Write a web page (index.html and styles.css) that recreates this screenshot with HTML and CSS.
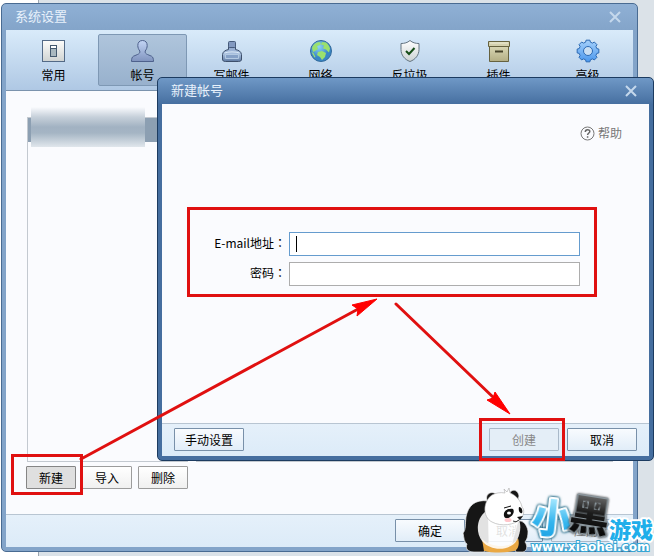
FILE: index.html
```
<!DOCTYPE html>
<html lang="zh-CN">
<head>
    <meta charset="UTF-8">
    <meta name="viewport" content="width=device-width, initial-scale=1.0">
    <title>系统设置</title>
    <link rel="stylesheet" href="styles.css">
</head>
<body>
    <div class="desktop">
        <section class="window">
            <header class="titlebar">
                <h1 class="title">系统设置</h1>
                <button type="button" class="close" aria-label="关闭">
                    <svg width="12" height="12" viewBox="0 0 12 12"><path d="M1 1L11 11M11 1L1 11"/></svg>
                </button>
            </header>
            <nav class="toolbar">
                <button type="button" class="tool">
                    <svg class="icon" viewBox="0 0 24 24">
                        <defs><linearGradient id="g-panel" x2="0" y2="1"><stop stop-color="#fdfdfb"/><stop offset="1" stop-color="#cfd3d2"/></linearGradient></defs>
                        <rect x="0.5" y="1.5" width="22" height="21" fill="url(#g-panel)" stroke="#536a86"/>
                        <rect x="8.5" y="6.5" width="6" height="11" fill="#a9b8bf" stroke="#44596e"/>
                        <path d="M9 7h5v2h-5z" fill="#fff"/><path d="M9 9.5h5" stroke="#44596e"/>
                    </svg>
                    <span>常用</span>
                </button>
                <button type="button" class="tool active">
                    <svg class="icon" viewBox="0 0 24 24">
                        <defs><linearGradient id="g-user" x2="0" y2="1"><stop stop-color="#c3d5f5"/><stop offset="1" stop-color="#7f93be"/></linearGradient></defs>
                        <path d="M11.500 1.500c-3.200 0-4.700 2.200-4.700 5 0 2 .8 4 2 5.500.4 1.800-.6 2.800-2.500 3.600L2.500 17.200c-1.500.8-2 2.500-2 5.300h22c0-2.800-.5-4.500-2-5.300l-3.800-1.600c-1.900-.8-2.900-1.800-2.500-3.600 1.200-1.500 2-3.500 2-5.500 0-2.800-1.500-5-4.700-5z" fill="url(#g-user)" stroke="#4e618c"/>
                    </svg>
                    <span>帐号</span>
                </button>
                <button type="button" class="tool">
                    <svg class="icon" viewBox="0 0 24 24">
                        <defs><linearGradient id="g-ink" x2="0" y2="1"><stop stop-color="#8ea6cb"/><stop offset=".5" stop-color="#a9c0de"/><stop offset="1" stop-color="#5f7aa2"/></linearGradient></defs>
                        <path d="M8.500 7.500h7v3c3.500.8 5.500 2 6 5v4.500c0 1.800-1 2.500-3 2.500h-13c-2 0-3-.7-3-2.500v-4.500c.5-3 2.500-4.200 6-5z" fill="url(#g-ink)" stroke="#3d4f6b"/>
                        <rect x="8.500" y="2.500" width="7" height="6" rx="1" fill="#8299c0" stroke="#465b7b"/>
                        <path d="M4.500 14c4-1.500 11-1.500 15 0" fill="none" stroke="#dceaf8"/>
                        <path d="M5.500 15.500h13v4h-13z" fill="#86a1c7" stroke="#b4cae3"/>
                    </svg>
                    <span>写邮件</span>
                </button>
                <button type="button" class="tool">
                    <svg class="icon" viewBox="0 0 24 24">
                        <defs><radialGradient id="g-globe" cx=".4" cy=".3"><stop stop-color="#8ed4f5"/><stop offset="1" stop-color="#3886c6"/></radialGradient></defs>
                        <circle cx="12" cy="12" r="10.500" fill="url(#g-globe)" stroke="#336a9b"/>
                        <path d="M3 9c1-3 3.500-5.500 7-6l2 1-1 2-3 1 1 3-3 2-2 1zM13 3l4 .5c2 1.500 3.500 3.500 4 6l-1 4-3-3-3-1 1-3-3-1zM9 13l4-1 4 2-1 4-3 3-2-3-3-2zM2.500 13l2 1 2 4-1 .5z" fill="#9be16d"/>
                    </svg>
                    <span>网络</span>
                </button>
                <button type="button" class="tool">
                    <svg class="icon" viewBox="0 0 24 24">
                        <defs><linearGradient id="g-shield" x2="0" y2="1"><stop stop-color="#fff"/><stop offset="1" stop-color="#cbd2d3"/></linearGradient></defs>
                        <path d="M12 1.500c2.500 2.200 5.500 3 9 3v6c0 5.500-3.500 10-9 12-5.500-2-9-6.500-9-12v-6c3.500 0 6.500-.8 9-3z" fill="url(#g-shield)" stroke="#647480"/>
                        <path d="M8 12l3 3 5.500-6" fill="none" stroke="#154c17" stroke-width="2"/>
                    </svg>
                    <span>反垃圾</span>
                </button>
                <button type="button" class="tool">
                    <svg class="icon" viewBox="0 0 24 24">
                        <defs><linearGradient id="g-box" x2="0" y2="1"><stop stop-color="#d8d6b3"/><stop offset="1" stop-color="#b3ae84"/></linearGradient></defs>
                        <path d="M2.500 7.500h19v15h-19z" fill="url(#g-box)" stroke="#66623f"/>
                        <path d="M1.500 2.500h21v5h-21z" fill="#d4d1ae" stroke="#66623f"/>
                        <path d="M3 4h18" stroke="#efeed9"/><path d="M8 12.500h8" stroke="#46432a" stroke-width="2"/>
                    </svg>
                    <span>插件</span>
                </button>
                <button type="button" class="tool">
                    <svg class="icon" viewBox="-12 -12 24 24">
                        <defs><linearGradient id="g-gear" x2="0" y2="1"><stop stop-color="#a5d0fa"/><stop offset="1" stop-color="#4b98ee"/></linearGradient></defs>
                        <path d="M10.830-1.910L10.830 1.910L8.800 2.400L7.900 4.600L9.010 6.310L6.310 9.010L4.600 7.900L2.400 8.800L1.910 10.830L-1.910 10.830L-2.400 8.800L-4.600 7.900L-6.310 9.010L-9.010 6.310L-7.900 4.600L-8.800 2.400L-10.830 1.910L-10.830-1.910L-8.800-2.400L-7.900-4.600L-9.010-6.310L-6.310-9.010L-4.600-7.900L-2.400-8.800L-1.910-10.830L1.910-10.830L2.400-8.800L4.600-7.900L6.310-9.010L9.010-6.310L7.900-4.600L8.800-2.400Z" fill="url(#g-gear)" stroke="#2c6ab4" stroke-linejoin="round"/>
                        <circle r="4.500" fill="#c8def3" stroke="#2c6ab4"/>
                    </svg>
                    <span>高级</span>
                </button>
            </nav>
            <div class="content">
                <div class="panes">
                    <div class="list">
                        <div class="row"><div class="masked"></div></div>
                    </div>
                    <div class="detail"></div>
                </div>
                <div class="list-actions">
                    <span class="mark mark-new"><button type="button" class="btn small pressed">新建</button></span>
                    <button type="button" class="btn small">导入</button>
                    <button type="button" class="btn small">删除</button>
                </div>
            </div>
            <footer class="footer">
                <button type="button" class="btn">确定</button>
                <button type="button" class="btn">取消</button>
                <button type="button" class="btn" disabled>应用</button>
            </footer>
        </section>

        <section class="window dialog" role="dialog" aria-labelledby="dialog-title">
            <header class="titlebar">
                <h2 class="title" id="dialog-title">新建帐号</h2>
                <button type="button" class="close" aria-label="关闭">
                    <svg width="12" height="12" viewBox="0 0 12 12"><path d="M1 1L11 11M11 1L1 11"/></svg>
                </button>
            </header>
            <div class="dialog-body">
                <a href="#" class="help">
                    <svg width="15" height="15" viewBox="0 0 15 15">
                        <circle cx="7.500" cy="7.500" r="6.500" fill="none" stroke="#777"/>
                        <path d="M5.300 6c0-3 4.500-3 4.500-.5 0 1.500-2.200 1.500-2.200 3.500M7.600 10.200v1.500" fill="none" stroke="#666" stroke-width="1.500"/>
                    </svg>
                    <span>帮助</span>
                </a>
                <form class="account-form" id="account-form">
                    <label for="email">E-mail地址<span class="colon" lang="zh-TW">：</span></label>
                    <div class="field focused"><input type="text" id="email"></div>
                    <label for="password">密码<span class="colon" lang="zh-TW">：</span></label>
                    <div class="field"><input type="password" id="password"></div>
                </form>
            </div>
            <footer class="footer">
                <button type="button" class="btn manual">手动设置</button>
                <span class="mark mark-create"><button type="submit" form="account-form" class="btn" disabled>创建</button></span>
                <button type="button" class="btn">取消</button>
            </footer>
        </section>

        <svg class="arrows" width="654" height="556" viewBox="0 0 654 556">
            <path d="M81 459L360 308M396 304L495 399" fill="none" stroke="#e01010" stroke-width="3" stroke-linecap="round"/>
            <path d="M377 299L357 316L358 309L352 305ZM510 414L487 400L493 398L495 392Z" fill="#f00" stroke="#f00"/>
        </svg>

        <svg class="logo" width="194" height="72" viewBox="460 484 194 72">
            <defs>
                <linearGradient id="g-blue" x2="0" y2="1"><stop offset=".2" stop-color="#a5e8ff"/><stop offset=".6" stop-color="#35b5ee"/><stop offset="1" stop-color="#149de0"/></linearGradient>
                <linearGradient id="g-black" x2="0" y2="1"><stop offset=".2" stop-color="#666"/><stop offset=".5" stop-color="#1c1c1c"/><stop offset="1" stop-color="#000"/></linearGradient>
            </defs>
            <!-- arms, legs and ears -->
            <g fill="#161616" stroke="#eee" stroke-width=".7">
                <path d="M488 501c-13-2-20 5-22 16-1 8 0 13-3 16 1 5 1 9 4 11-2 5 1 8 7 8h10l5-10z"/>
                <path d="M518 521c5-1 9 4 10 10 0 6-1 8-3 11 3 4 2 9-2 10h-7l-4-9z"/>
                <circle cx="492" cy="498" r="5.500"/><path d="M510 493c1-4 8-4 9 3l-1 4z"/>
            </g>
            <path d="M482 539c9 9 30 10 36-1 2 6 0 12-4 13-9 2-21 2-30 0z" fill="#eaa843"/>
            <path d="M486 511c-9 7-11 20-4 30 9 11 29 10 35-1 4-8 4-15 2-20z" fill="#fff" fill-opacity=".88"/>
            <path d="M505 493l-1-4 3 3 2-4 1 5c6 2 11 8 12 14 3 3 2 9-2 12-5 6-19 8-28 3-10-5-9-21 0-27 4-2 8-3 13-2z" fill="#fff" stroke="#aaa" stroke-width=".6"/>
            <path d="M513 509c-5-1-10 2-9 7 1 4 7 2 9-2 1-2 1-4 0-5zM519 507c3 0 4 4 3 6-2 1-4-2-3-6zM517 517l6-1-3 4z" fill="#111"/>
            <path d="M504 508l7-2" stroke="#111"/><ellipse cx="509" cy="513" rx="2" ry="1.500" fill="#fff"/>
            <ellipse cx="508" cy="520" rx="3.500" ry="2" fill="#ffc5ca"/><path d="M513 521q3 2 6-1" fill="none" stroke="#333"/>
            <text class="brand" x="532" y="533" font-size="40" fill="url(#g-blue)" transform="rotate(6 552 518)">小</text>
            <text class="brand dark" x="570" y="530" font-size="40" fill="url(#g-black)" transform="rotate(9 590 515)">黑</text>
            <text class="brand light" x="609" y="538" font-size="22" fill="#20aeea">游戏</text>
            <text class="url" x="531" y="551">www.xiaohei.com</text>
        </svg>
    </div>
</body>
</html>
```
FILE: styles.css
```
* {
    margin: 0;
    padding: 0;
    box-sizing: border-box;
}
body {
    font-family: "Noto Sans CJK SC", sans-serif;
    font-size: 12px;
    line-height: 16px;
    color: #000;
}
button, input {
    font: inherit;
    color: inherit;
}
.desktop {
    position: relative;
    display: flex;
    min-height: 100vh;
    padding: 3px 16px 4px 1px;
    background: linear-gradient(to right, #fff 38px, #9ca6b0 38px, #9ca6b0 39px, #dbe2e8 39px);
    overflow: hidden;
}

/* windows */
.window {
    flex: 1;
    display: flex;
    flex-direction: column;
    padding: 0 4px 4px;
    border: 1px solid #496b92;
    border-radius: 5px;
    background: linear-gradient(#8fb0d5, #83a4c9 27px, #83a4c9);
}
.titlebar {
    display: flex;
    justify-content: space-between;
    align-items: center;
    height: 26px;
    padding: 0 12px 0 9px;
}
.title {
    font-size: 13px;
    line-height: 24px;
    align-self: flex-start;
    font-weight: normal;
    color: #e8f1fb;
}
.close {
    width: 12px;
    height: 12px;
    border: none;
    background: none;
}
.close svg {
    display: block;
    fill: none;
    stroke: #c5d8ec;
    stroke-width: 2;
}
.toolbar {
    display: grid;
    grid-template-columns: repeat(7, 1fr);
    padding: 4px 1px 4px 3px;
    border-bottom: 1px solid #7b93ad;
    background: linear-gradient(#d9ebfa, #afc8e4);
}
.tool {
    display: flex;
    flex-direction: column;
    align-items: center;
    gap: 4px;
    height: 52px;
    padding-top: 4px;
    border: 1px solid transparent;
    border-radius: 2px;
    background: none;
}
.tool.active {
    border-color: #7e98b4;
    background: linear-gradient(#afc5dc, #98b1cd);
}
.icon {
    width: 24px;
    height: 24px;
}
.content {
    flex: 1;
    display: flex;
    flex-direction: column;
    gap: 4px;
    padding: 26px 20px 25px;
    background: #fafbfe;
}
.panes {
    flex: 1;
    display: flex;
    gap: 8px;
    padding-left: 1px;
}
.list {
    width: 161px;
    border: 1px solid #c3c9d0;
}
.detail {
    flex: 1;
    border: 1px solid #c3c9d0;
}
.row {
    height: 24px;
    background: #8c9fb2;
}
.masked {
    position: absolute;
    left: 31px;
    top: 107px;
    width: 114px;
    height: 40px;
    background: linear-gradient(#fafbfe, #c6d0da 25%, #a2b2c2 50%, #a5b5c4 65%, #e0e6ec);
}
.list-actions {
    display: flex;
    gap: 6px;
}
.footer {
    display: flex;
    justify-content: flex-end;
    gap: 8px;
    padding: 4px 12px 5px;
    border-top: 1px solid #b8c5d2;
    background: linear-gradient(#e5f0fa, #dcebf8);
}
.btn {
    width: 70px;
    height: 23px;
    border: 1px solid #7890a9;
    border-radius: 1px;
    background: linear-gradient(#f8fbfe, #e1edf8);
    line-height: 20px;
}
.btn:disabled {
    border-color: #a9b9c9;
    background: #e4eef7;
    color: #888;
}
.btn.small {
    width: 50px;
    border-color: #9c9c9c;
    background: linear-gradient(#fff, #f0f0f0);
}
.btn.pressed {
    border-color: #858585;
    background: #dfdfdf;
}
.manual {
    margin-right: auto;
}

/* new account dialog */
.dialog {
    position: absolute;
    top: 77px;
    right: 0;
    bottom: 95px;
    left: 157px;
    border-color: #1c3b60;
    background: linear-gradient(#6f98c6, #456e9f 27px, #456e9f);
}
.dialog-body {
    flex: 1;
    display: flex;
    flex-direction: column;
    padding: 21px 27px 0 25px;
    background: #fafbfe;
}
.help {
    align-self: flex-end;
    display: flex;
    align-items: center;
    gap: 3px;
    color: #777;
    text-decoration: none;
}
.account-form {
    display: grid;
    grid-template-columns: 96px 1fr;
    align-items: center;
    gap: 6px 3px;
    margin: 66px 25px 0 0;
    padding: 22px 14px 8px 0;
    border: 3px solid #e01010;
}
.account-form label {
    padding-bottom: 2px;
    text-align: right;
    white-space: nowrap;
}
.colon {
    font-family: "Noto Sans CJK TC", sans-serif;
}
.field {
    position: relative;
}
.field input {
    display: block;
    width: 100%;
    height: 24px;
    padding: 0 6px;
    border: 1px solid #adadad;
    background: #fff;
    outline: none;
}
.field.focused input {
    border-color: #659cce;
}
.field.focused::after {
    content: "";
    position: absolute;
    left: 7px;
    top: 4px;
    width: 1px;
    height: 16px;
    background: #000;
}

/* red guide marks */
.mark {
    position: relative;
    display: flex;
}
.mark::after {
    content: "";
    position: absolute;
    border: 3px solid #e01010;
    pointer-events: none;
}
.mark-new::after {
    inset: -12px -7px -6px -15px;
}
.mark-create::after {
    inset: -10px -6px -10px -10px;
}
.arrows {
    position: absolute;
    top: 0;
    left: 0;
    pointer-events: none;
}

/* site logo */
.logo {
    position: absolute;
    right: 0;
    bottom: 0;
}
.brand {
    font-weight: 900;
    stroke: #fff;
    stroke-width: 4;
    stroke-linejoin: round;
    paint-order: stroke;
    filter: drop-shadow(0 0 1px #14607f) drop-shadow(0 0 1px #14607f);
}
.brand.dark {
    stroke: #8b979e;
    stroke-width: 3;
    filter: drop-shadow(0 0 1px #222);
}
.brand.light {
    filter: none;
}
.url {
    font-family: "DejaVu Sans", sans-serif;
    font-size: 12px;
    font-weight: bold;
    fill: #fff;
    stroke: #36a6d4;
    stroke-width: 2;
    paint-order: stroke;
}
```
